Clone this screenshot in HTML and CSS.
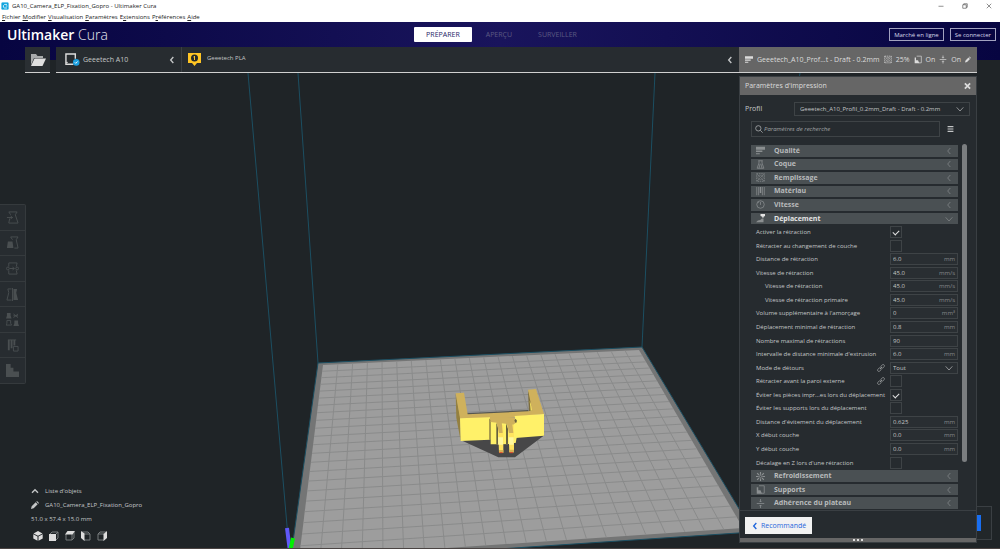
FILE: index.html
```html
<!doctype html>
<html lang="fr">
<head>
  <title>GA10_Camera_ELP_Fixation_Gopro - Ultimaker Cura</title>
  <meta charset="UTF-8">
  <meta name="viewport" content="width=device-width, initial-scale=1">
  <link rel="stylesheet" href="styles.css">
</head>
<body>
  <svg class="sprite" aria-hidden="true">
    <symbol id="left" viewBox="0 0 12 12"><path d="M8 1.5 4 6l4 4.5"/></symbol>
    <symbol id="down" viewBox="0 0 12 12"><path d="M1 3.5 6 9l5-5.500"/></symbol>
    <symbol id="up" viewBox="0 0 12 12"><path d="M1.500 8.500 6 4l4.500 4.500"/></symbol>
    <symbol id="quality" viewBox="0 0 12 12"><path class="solid" d="M0 1h12v4H0zM0 6h8.500v2H0zM0 9.500h5V11H0z"/></symbol>
    <symbol id="shell" viewBox="0 0 12 12"><path d="M3 1h6M4 1v3L1.500 11h9L8 4V1M5.500 5 4 11M6.500 5 8 11"/></symbol>
    <symbol id="infill" viewBox="0 0 12 12"><path stroke-dasharray="2 1" d="M1 1h10v10H1z"/><path stroke-dasharray="1.500 1" d="M6 2.500 9.500 6 6 9.500 2.500 6zM1 1l10 10M11 1 1 11"/></symbol>
    <symbol id="material" viewBox="0 0 12 12"><path d="M1 0v11M3.500 0v11M8.500 0v11M11 0v11"/><path stroke-width="2" d="M6 0v8"/></symbol>
    <symbol id="speed" viewBox="0 0 12 12"><circle cx="6" cy="6" r="5"/><path d="M6 2.500V6.500M3 3l1 1"/></symbol>
    <symbol id="travel" viewBox="0 0 12 12"><path fill="#e4e4e4" stroke="none" d="M6 0h6v2.500l-2 1V5H8.500V3.500L6 2.500z"/><path class="solid" d="M0 11l2.500-2.500 3-.5L8 6h2v5z"/></symbol>
    <symbol id="cooling" viewBox="0 0 12 12"><circle cx="6" cy="6" r="1.500"/><path stroke-width="1.500" d="M6 0v3.500M6 8.500V12M0 6h3.500M8.500 6H12M1.500 1.500l2.500 2.500M8 8l2.500 2.500M10.500 1.500 8 4M4 8l-2.500 2.500"/></symbol>
    <symbol id="support" viewBox="0 0 12 12"><path d="M4 1h7v10H7"/><path class="solid" d="M1 3h2v4h3l2 4.500H1z"/></symbol>
    <symbol id="adhesion" viewBox="0 0 12 12"><path d="M1 6h10M6 0v4M6 12V8M4.500 2.500 6 4l1.500-1.500M4.500 9.500 6 8l1.500 1.500"/></symbol>
    <symbol id="pencil" viewBox="0 0 12 12"><path class="solid" d="M0 12l1-4L7 2l3 3-6 6zM8 1l1-1 3 3-1 1z"/></symbol>
    <symbol id="link" viewBox="0 0 12 12"><rect x="5.500" y="1.500" width="6" height="4" rx="2" transform="rotate(-45 8.500 3.500)"/><rect x=".5" y="6.500" width="6" height="4" rx="2" transform="rotate(-45 3.500 8.500)"/><path d="M4.500 7.500l3-3"/></symbol>
    <symbol id="close" viewBox="0 0 12 12"><path d="M1.500 1.500l9 9M10.500 1.500l-9 9"/></symbol>
    <symbol id="search" viewBox="0 0 12 12"><circle cx="5" cy="5" r="4"/><path d="M8 8l3.500 3.500"/></symbol>
  </svg>

  <header class="window-bar">
    <svg class="app-logo" viewBox="0 0 10 10"><rect width="10" height="10" rx="2"/><path d="M7.500 3H4.500L3 4.500v2L4.500 7.500h3M6 5h2"/></svg>
    <span class="window-title">GA10_Camera_ELP_Fixation_Gopro - Ultimaker Cura</span>
    <div class="window-buttons">
      <button aria-label="Réduire"><svg class="icon" viewBox="0 0 12 12"><path d="M1 6.500h10"/></svg></button>
      <button aria-label="Restaurer"><svg class="icon" viewBox="0 0 12 12"><path d="M1.500 3.500h7v7h-7zM3.500 3.500v-2h7v7h-2"/></svg></button>
      <button aria-label="Fermer"><svg class="icon"><use href="#close"/></svg></button>
    </div>
  </header>
  <nav class="menu-bar">
    <a href="#"><u>F</u>ichier</a>
    <a href="#"><u>M</u>odifier</a>
    <a href="#"><u>V</u>isualisation</a>
    <a href="#"><u>P</u>aramètres</a>
    <a href="#">E<u>x</u>tensions</a>
    <a href="#">P<u>r</u>éférences</a>
    <a href="#"><u>A</u>ide</a>
  </nav>

  <div class="app">
    <header class="top-bar">
      <h1><b>Ultimaker</b> Cura</h1>
      <nav class="stages">
        <button class="stage active">PRÉPARER</button>
        <button class="stage">APERÇU</button>
        <button class="stage">SURVEILLER</button>
      </nav>
      <div class="account">
        <button>Marché en ligne</button>
        <button>Se connecter</button>
      </div>
    </header>

    <div class="stage-menu">
      <button class="open-file" aria-label="Ouvrir">
        <svg viewBox="0 0 16 14"><path fill="#a8abac" d="M1 12V1h5l1.500 2H13v2H4z"/><path fill="#e0e0e0" d="M4.500 5.500H16L12.500 13H1z"/></svg>
      </button>
      <div class="configuration">
        <button class="machine">
          <svg class="machine-icon" viewBox="0 0 16 14"><path fill="none" stroke="#ddd" stroke-width="1.500" d="M11 6V1H1v11h8"/><path stroke="#ddd" d="M1 10h2"/><circle cx="12" cy="10" r="3.500" fill="#1b9fe0"/><path fill="none" stroke="#fff" d="M10.500 10l1 1 2-2"/></svg>
          Geeetech A10
          <svg class="icon arrow"><use href="#left"/></svg>
        </button>
        <button class="material">
          <svg class="material-icon" viewBox="0 0 13 14"><path fill="#ffc524" d="M0 0h13v10H9l-2.500 3L4 10H0z"/><circle cx="6.500" cy="5" r="3.500" fill="#23282b"/><path stroke="#ffc524" d="M6.500 3v4M5.500 4h1"/></svg>
          <span class="material-name">Geeetech PLA</span>
          <svg class="icon arrow"><use href="#left"/></svg>
        </button>
      </div>
      <button class="print-summary">
        <svg class="icon"><use href="#quality"/></svg>
        <span class="summary-profile">Geeetech_A10_Prof...t - Draft - 0.2mm</span>
        <svg class="icon"><use href="#infill"/></svg><span>25%</span>
        <svg class="icon"><use href="#support"/></svg><span>On</span>
        <svg class="icon"><use href="#adhesion"/></svg><span>On</span>
        <svg class="icon small"><use href="#pencil"/></svg>
      </button>
    </div>

    <main class="workspace">
      <svg class="scene" viewBox="0 73 1000 475" preserveAspectRatio="xMidYMin slice">
        <polygon class="plate-edge" points="318,363 642,347 753,532 290,563"/>
        <polygon class="plate" points="323,365 639,350 743,528 299,558"/>
        <g id="plate-grid"></g>
        <path class="volume" d="M248 73 289 549M298 73l20 290M655 73l-13 274M800 73l-3 20M290 563 318 363 642 347 753 532z"/>
        <path stroke="#6058f8" stroke-width="4" d="M287 528l3 24"/>
        <path stroke="#00f000" stroke-width="4" d="M293 538l-3 14"/>
        <g transform="translate(430 370) scale(.3333)">
          <path fill="#474748" d="M92 210 205 262h50l88-66-60-20H120z"/>
          <path fill="#55564f" d="M105 130l190-10v16H105z"/>
          <path fill="#94803f" d="M77 70 91 145l1 68-13-70z"/>
          <path fill="#7c6c3b" d="M294 62l3 62 25-5z"/>
          <path fill="#f0dc60" d="M299 92l12 28-9 3z"/>
          <path fill="#cfb15c" d="M77 70l25-2 11 65 194-10-13-64 24-2 24 75-87 8-75 14-90-9z"/>
          <path fill="#fff169" d="M90 145l90-3v67l-88 4zM254 138l88-6v65l-86 7z"/>
          <path fill="#7d7040" d="M178 145l5 8v56h-5z"/>
          <path fill="#fff169" d="M182 153h78v50l-3 16h-6l-19 4h-50z"/>
          <path fill="#cfb15c" d="M180 142h72l8 14-10 8-68-8z"/>
          <path fill="#66603f" d="M199 158l5 14v51h-5zM228 160l6 16v46h-6zM257 146l4 6-3 8-5-8z"/>
          <path fill="#474748" d="M220 224h16v26h-16z"/>
          <path fill="#ffe45f" d="M204 165h16v83h-13zM235 165h17v82h-14z"/>
          <path fill="#cfb15c" d="M198 150l17 3 3 36h-11zM228 150l18 3 4 36h-13z"/>
          <path fill="#fff8a0" d="M204 202h15v22h-14zM236 202h15v22h-14z"/>
          <path fill="#d8b154" d="M207 240h13v8h-13zM238 239h14v8h-14z"/>
          <path stroke="#e3482c" stroke-width="3" d="M208 248h10M239 248h10"/>
        </g>
      </svg>

      <div class="left-side">
        <div class="tools">
          <button aria-label="Déplacer"><svg class="icon" viewBox="0 0 14 14"><path d="M3 1h9l-2 3 3 9H3l1-5M3 1l2 3M1 7h6M5 5.500 7 7 5 8.500"/></svg></button>
          <button aria-label="Mettre à l'échelle"><svg class="icon" viewBox="0 0 14 14"><path d="M5 1h8l-2 3 2 9H9M5 1l2 3"/><path class="solid" d="M2 6h5l1 7H1z"/></svg></button>
          <button aria-label="Tourner"><svg class="icon" viewBox="0 0 14 14"><path d="M3 5V1h9l-1 4M3 9v4h9l-1-4M4 7h5M7 5.500 9 7 7 8.500"/><circle cx="2" cy="7" r="1.500"/><circle cx="12" cy="7" r="1.500"/></svg></button>
          <button aria-label="Miroir"><svg class="icon" viewBox="0 0 14 14"><path d="M6 1H2l1 4-2 8h5M7 0v14"/><path class="solid" d="M8 1h4l-1 4 2 8H8z"/></svg></button>
          <button aria-label="Paramètres par modèle"><svg class="icon" viewBox="0 0 14 14"><path class="solid" d="M1 0h4v3l1 3H0l1-3zM9 8h4v3l1 3H8l1-3z"/><path d="M8 1l5 4M13 1 8 5M8 3h5M1 8h4v3l1 2H0l1-2z"/></svg></button>
          <button aria-label="Bloqueur de support"><svg class="icon" viewBox="0 0 14 14"><path stroke-width="2" d="M3 1v11M6 1v9M9 1v6"/><path d="M2 1h9M8 8h5v5H8z"/></svg></button>
          <button aria-label="Supports"><svg class="icon" viewBox="0 0 14 14"><path class="solid" d="M0 0h5v4h3v4h6v6H0z"/></svg></button>
        </div>
        <div class="objects">
          <button class="object-toggle"><svg class="icon"><use href="#up"/></svg>Liste d'objets</button>
          <button class="object-name"><svg class="icon"><use href="#pencil"/></svg>GA10_Camera_ELP_Fixation_Gopro</button>
          <p>51.0 x 57.4 x 15.0 mm</p>
          <div class="views">
            <button aria-label="Vue 3D"><svg viewBox="0 0 10 10"><path fill="#ddd" d="M5 0l4.500 2.500L5 4.800.5 2.500zM.3 3.300l4.200 2.200v4.300L.3 7.500zM9.700 3.300 5.500 5.500v4.300l4.200-2.300z"/></svg></button>
            <button aria-label="Vue de face"><svg viewBox="0 0 10 10"><path class="cube" d="M1 3l2-2h6v6L7 9M7 3l2-2"/><path fill="#ddd" d="M0 3h7v7H0z"/></svg></button>
            <button aria-label="Vue du dessus"><svg viewBox="0 0 10 10"><path class="cube" d="M1 3v6h6V3M7 9l2-2V1"/><path fill="#ddd" d="M0 3.500 2.500 0H10L7.500 3.500z"/></svg></button>
            <button aria-label="Vue de gauche"><svg viewBox="0 0 10 10"><path class="cube" d="M3 3h6v6H3M1 1h6l2 2"/><path fill="#ddd" d="M0 0l3.500 2.500V10L0 7z"/></svg></button>
            <button aria-label="Vue de droite"><svg viewBox="0 0 10 10"><path class="cube" d="M7 3H1v6h6M1 3l2-2h6"/><path fill="#ddd" d="M6.500 3 10 0v7l-3.500 3z"/></svg></button>
          </div>
        </div>
      </div>

      <div class="action-panel"><button aria-label="Découper"></button></div>

      <section class="settings-panel">
        <header class="panel-title">
          <h2>Paramètres d'impression</h2>
          <button aria-label="Fermer"><svg class="icon"><use href="#close"/></svg></button>
        </header>
        <div class="profile-row">
          <label for="profile">Profil</label>
          <div class="select profile-select">
            <select id="profile"><option>Geeetech_A10_Profil_0.2mm_Draft - Draft - 0.2mm</option></select>
            <svg class="icon"><use href="#down"/></svg>
          </div>
        </div>
        <div class="search-row">
          <div class="search">
            <svg class="icon"><use href="#search"/></svg>
            <input type="search" placeholder="Paramètres de recherche" aria-label="Paramètres de recherche">
          </div>
          <button aria-label="Visibilité"><svg class="icon" viewBox="0 0 12 12"><path d="M1 2h10M1 6h10M1 10h10"/></svg></button>
        </div>

        <div class="settings-scroll">
          <div class="settings">
            <button class="category"><svg class="icon"><use href="#quality"/></svg>Qualité<svg class="icon arrow"><use href="#left"/></svg></button>
            <button class="category"><svg class="icon"><use href="#shell"/></svg>Coque<svg class="icon arrow"><use href="#left"/></svg></button>
            <button class="category"><svg class="icon"><use href="#infill"/></svg>Remplissage<svg class="icon arrow"><use href="#left"/></svg></button>
            <button class="category"><svg class="icon"><use href="#material"/></svg>Matériau<svg class="icon arrow"><use href="#left"/></svg></button>
            <button class="category"><svg class="icon"><use href="#speed"/></svg>Vitesse<svg class="icon arrow"><use href="#left"/></svg></button>
            <button class="category open"><svg class="icon"><use href="#travel"/></svg>Déplacement<svg class="icon arrow"><use href="#down"/></svg></button>
            <div class="setting"><label for="s1">Activer la rétraction</label><div class="control"><input type="checkbox" id="s1" checked></div></div>
            <div class="setting"><label for="s2">Rétracter au changement de couche</label><div class="control"><input type="checkbox" id="s2"></div></div>
            <div class="setting"><label for="s3">Distance de rétraction</label><div class="control field"><input type="text" id="s3" value="6.0"><span>mm</span></div></div>
            <div class="setting"><label for="s4">Vitesse de rétraction</label><div class="control field"><input type="text" id="s4" value="45.0"><span>mm/s</span></div></div>
            <div class="setting child"><label for="s5">Vitesse de rétraction</label><div class="control field"><input type="text" id="s5" value="45.0"><span>mm/s</span></div></div>
            <div class="setting child"><label for="s6">Vitesse de rétraction primaire</label><div class="control field"><input type="text" id="s6" value="45.0"><span>mm/s</span></div></div>
            <div class="setting"><label for="s7">Volume supplémentaire à l'amorçage</label><div class="control field"><input type="text" id="s7" value="0"><span>mm³</span></div></div>
            <div class="setting"><label for="s8">Déplacement minimal de rétraction</label><div class="control field"><input type="text" id="s8" value="0.8"><span>mm</span></div></div>
            <div class="setting"><label for="s9">Nombre maximal de rétractions</label><div class="control field"><input type="text" id="s9" value="90"></div></div>
            <div class="setting"><label for="s10">Intervalle de distance minimale d'extrusion</label><div class="control field"><input type="text" id="s10" value="6.0"><span>mm</span></div></div>
            <div class="setting"><label for="s11">Mode de détours</label><svg class="icon"><use href="#link"/></svg><div class="control select"><select id="s11"><option>Tout</option></select><svg class="icon"><use href="#down"/></svg></div></div>
            <div class="setting"><label for="s12">Rétracter avant la paroi externe</label><svg class="icon"><use href="#link"/></svg><div class="control"><input type="checkbox" id="s12"></div></div>
            <div class="setting"><label for="s13">Éviter les pièces impr...es lors du déplacement</label><div class="control"><input type="checkbox" id="s13" checked></div></div>
            <div class="setting"><label for="s14">Éviter les supports lors du déplacement</label><div class="control"><input type="checkbox" id="s14"></div></div>
            <div class="setting"><label for="s15">Distance d'évitement du déplacement</label><div class="control field"><input type="text" id="s15" value="0.625"><span>mm</span></div></div>
            <div class="setting"><label for="s16">X début couche</label><div class="control field"><input type="text" id="s16" value="0.0"><span>mm</span></div></div>
            <div class="setting"><label for="s17">Y début couche</label><div class="control field"><input type="text" id="s17" value="0.0"><span>mm</span></div></div>
            <div class="setting"><label for="s18">Décalage en Z lors d'une rétraction</label><div class="control"><input type="checkbox" id="s18"></div></div>
            <button class="category"><svg class="icon"><use href="#cooling"/></svg>Refroidissement<svg class="icon arrow"><use href="#left"/></svg></button>
            <button class="category"><svg class="icon"><use href="#support"/></svg>Supports<svg class="icon arrow"><use href="#left"/></svg></button>
            <button class="category"><svg class="icon"><use href="#adhesion"/></svg>Adhérence du plateau<svg class="icon arrow"><use href="#left"/></svg></button>
          </div>
          <div class="scrollbar"></div>
        </div>

        <footer class="panel-footer">
          <button class="recommended"><svg class="icon"><use href="#left"/></svg>Recommandé</button>
        </footer>
        <div class="resize-handle"><i></i><i></i><i></i></div>
      </section>
    </main>
  </div>
  <script src="scene.js"></script>
</body>
</html>
```
FILE: styles.css
```css
* { box-sizing: border-box }
html, body { height: 100% }
body {
  margin: 0;
  display: flex;
  flex-flow: column;
  color: #c4c6c7;
  background: #1f2427;
  font: 6px/8px 'Open Sans', 'Noto Sans', sans-serif }
button, input, select {
  margin: 0;
  padding: 0;
  border: 0;
  font: inherit;
  color: inherit;
  background: none }
button {
  display: flex;
  align-items: center;
  justify-content: center }
h1, h2, p { margin: 0 }
.sprite {
  position: absolute;
  width: 0;
  height: 0 }
.icon {
  flex: none;
  width: 8px;
  height: 8px;
  fill: none;
  stroke: currentColor;
  stroke-width: 1 }
  .solid {
    fill: currentColor;
    stroke: none }
.arrow {
  margin-left: auto;
  stroke-width: 2 }

/* Window frame */
.window-bar, .menu-bar {
  flex: none;
  display: flex;
  align-items: center;
  background: white;
  color: #222 }
.window-bar {
  height: 12px;
  padding: 0 8px 0 1px;
  gap: 3px }
  .app-logo {
    width: 8px;
    height: 8px;
    fill: #12a5de;
    stroke: white }
  .window-buttons {
    display: flex;
    gap: 18px;
    margin-left: auto }
    .window-buttons .icon {
      width: 6px;
      height: 6px;
      stroke-width: 1 }
.menu-bar {
  height: 10px;
  padding: 0 2px;
  gap: 2px }
  .menu-bar a {
    color: inherit;
    text-decoration: none }

/* The navy band runs on behind the top of the stage menu */
.app {
  flex: 1;
  display: flex;
  flex-flow: column;
  border-bottom: 1px solid #4a4443;
  background: linear-gradient(90deg, #070541, #19145c 50%, #070541) 0 0 / 100% 38px no-repeat }
.top-bar {
  height: 25px;
  padding: 0 4px 0 7px;
  display: grid;
  grid-template-columns: 1fr auto 1fr;
  align-items: center }
  h1 {
    font-size: 14px;
    font-weight: 300;
    line-height: 18px;
    color: #e8e8f0 }
    h1 b {
      font-weight: 600;
      color: white }
  .stages {
    display: flex;
    gap: 2px }
    .stage {
      height: 15px;
      padding: 0 12px;
      border-radius: 1px;
      font-size: 7px;
      color: #5c5a83 }
      .stage.active {
        background: white;
        color: #1e2466 }
  .account {
    display: flex;
    justify-content: flex-end;
    gap: 6px }
    .account button {
      height: 13px;
      padding: 0 4px;
      border: 1px solid #a2a2c0;
      color: #d8d8e8 }

.stage-menu {
  flex: none;
  height: 26px;
  display: flex;
  padding: 0 23px 0 25px }
  .stage-menu > * { border-bottom: 1px solid #d0d0d0 }
  .open-file {
    width: 25px;
    margin-right: 6px;
    background: #2a2f33 }
    .open-file svg { width: 16px }
  .configuration {
    flex: 1;
    display: flex;
    background: #272c30 }
    .machine, .material { padding: 0 5px 0 9px }
    .machine {
      width: 126px;
      gap: 3px;
      font-size: 7px;
      border-right: 1px solid #3a3f43 }
      .machine-icon { width: 15px }
    .material {
      flex: 1;
      gap: 6px;
      padding-left: 6px }
      .material-icon { width: 13px }
      .material-name { padding-bottom: 4px }
  .print-summary {
    width: 238px;
    padding: 0 6px;
    gap: 4px;
    justify-content: flex-start;
    background: #666;
    color: #dcdcdc;
    font-size: 7px }
    .print-summary .icon { height: 9px }
    .summary-profile {
      flex: 1;
      text-align: left;
      white-space: nowrap }
    .print-summary .small { width: 6px }

/* 3D view */
.workspace {
  flex: 1;
  position: relative;
  display: flex;
  justify-content: space-between;
  background: #1f2427 }
.scene {
  position: absolute;
  width: 100%;
  height: 100% }
  .plate-edge { fill: #747575 }
  .plate { fill: #9d9d9d }
  #plate-grid line { stroke: #8a8b8b }
  .volume {
    fill: none;
    stroke: #1c4f62 }
.left-side {
  position: relative;
  display: flex;
  flex-flow: column;
  justify-content: space-between;
  padding: 131px 0 6px }
.tools {
  width: 26px;
  height: 180px;
  display: flex;
  flex-flow: column;
  border: 1px solid #353a3d;
  border-left: 0;
  border-radius: 0 2px 2px 0;
  background: #272c30;
  color: #4a4f51 }
  .tools button {
    flex: 1;
    padding-right: 1px }
  .tools button + button { border-top: 1px solid #353a3d }
  .tools .icon {
    width: 13px;
    height: 13px }
.objects {
  padding-left: 31px;
  display: flex;
  flex-flow: column;
  align-items: flex-start;
  gap: 5px }
  .object-toggle, .object-name { gap: 6px }
  .object-toggle .icon { stroke-width: 2 }
  .object-name { height: 10px }
  .views {
    display: flex;
    gap: 6px;
    padding: 3px 2px 1px }
    .views svg {
      width: 10px;
      height: 10px }
    .cube {
      fill: none;
      stroke: #777b7d }
.action-panel {
  position: absolute;
  right: 8px;
  bottom: 8px;
  width: 240px;
  height: 34px;
  padding: 8px 10px;
  border: 1px solid #3a3f43;
  background: #22272a }
  .action-panel button {
    width: 100%;
    height: 16px;
    background: #196ef0 }

/* Print settings */
.settings-panel {
  position: relative;
  width: 238px;
  margin: 3px 23px 5px 0;
  display: flex;
  flex-flow: column;
  border: 1px solid #3a3f43;
  background: #262b2f }
.panel-title {
  height: 18px;
  padding: 0 5px;
  display: flex;
  align-items: center;
  justify-content: space-between;
  background: #666;
  color: #dcdcdc }
  .panel-title h2 {
    font-size: 7px;
    font-weight: 400;
    line-height: 10px }
  .panel-title .icon {
    width: 7px;
    stroke-width: 3 }
.profile-row {
  display: flex;
  align-items: center;
  justify-content: space-between;
  padding: 7px 6px 5px 5px;
  font-size: 7px }
.select {
  display: flex;
  align-items: center;
  border: 1px solid #3e4346;
  padding-right: 5px }
  .select select {
    flex: 1;
    appearance: none;
    min-width: 0 }
.profile-select {
  width: 176px;
  height: 14px;
  padding-left: 5px;
  font-size: 6px }
.search-row {
  display: flex;
  gap: 7px;
  padding: 0 22px 7px 11px }
  .search {
    flex: 1;
    height: 16px;
    display: flex;
    align-items: center;
    gap: 1px;
    padding: 0 3px;
    border: 1px solid #3e4346 }
    .search input {
      flex: 1;
      font-style: italic;
      outline: 0 }
    .search input::placeholder { color: #a0a3a4 }
  .search-row button .icon {
    width: 7px;
    stroke-width: 2 }
.settings-scroll {
  flex: 1;
  display: flex;
  gap: 4px;
  padding: 0 11px }
.settings {
  flex: 1;
  display: grid;
  grid-auto-rows: 1fr }
.category {
  margin: 1px 0;
  padding: 0 5px;
  gap: 9px;
  background: #4a5053;
  color: #b8babb;
  font-size: 7px;
  font-weight: 700 }
  .category .icon {
    width: 9px;
    height: 9px;
    color: #8b8f91 }
  .category .arrow {
    width: 8px;
    height: 8px;
    stroke-width: 1 }
  .category.open { color: #e4e4e4 }
.setting {
  display: flex;
  align-items: center;
  gap: 5px;
  padding-left: 5px;
  white-space: nowrap }
  .setting label { flex: 1 }
  .setting.child label { padding-left: 9px }
  .setting > .icon { color: #a0a3a4 }
.control {
  width: 68px;
  height: 12px;
  display: flex }
.field, .control.select {
  align-items: center;
  padding: 0 2px;
  border: 1px solid #3e4346;
  background: #292e32 }
  .control.select { padding-right: 4px }
  .field input { flex: 1; width: 0 }
  .field span { color: #85898b }
input[type=checkbox] {
  appearance: none;
  width: 12px;
  border: 1px solid #3e4346;
  display: grid;
  place-items: center }
  input[type=checkbox]:checked::after {
    content: '';
    width: 5px;
    height: 3px;
    border: solid #e0e0e0;
    border-width: 0 0 1px 1px;
    transform: rotate(-45deg) }
.scrollbar {
  flex: none;
  width: 5px;
  height: 87%;
  border-radius: 3px;
  background: #7b7e80 }
.panel-footer {
  padding: 6px 5px 4px;
  border-top: 1px solid #3a3f43 }
  .recommended {
    height: 17px;
    padding: 0 6px;
    gap: 2px;
    background: #f2f2f2;
    color: #1f66dc;
    font-size: 7px }
    .recommended .icon { stroke-width: 2 }
.resize-handle {
  height: 4px;
  display: flex;
  align-items: center;
  justify-content: center;
  gap: 2px;
  background: #666 }
  .resize-handle i {
    width: 2px;
    height: 2px;
    background: #ddd }
```
FILE: scene.js
```js
// Draws the build plate grid, projected onto the four corners of the plate
const corners = [[323, 365], [639, 350], [743, 528], [299, 558]];
const cells = 22;

const [[x0, y0], [x1, y1], [x2, y2], [x3, y3]] = corners;
const dx1 = x1 - x2, dx2 = x3 - x2, sx = x0 - x1 + x2 - x3;
const dy1 = y1 - y2, dy2 = y3 - y2, sy = y0 - y1 + y2 - y3;
const det = dx1 * dy2 - dx2 * dy1;
const g = (sx * dy2 - dx2 * sy) / det;
const h = (dx1 * sy - sx * dy1) / det;

function project (u, v) {
  const w = g * u + h * v + 1;
  return [
    ((x1 - x0 + g * x1) * u + (x3 - x0 + h * x3) * v + x0) / w,
    ((y1 - y0 + g * y1) * u + (y3 - y0 + h * y3) * v + y0) / w
  ];
}

function addLine (from, to) {
  const line = document.createElementNS("http://www.w3.org/2000/svg", "line");
  line.setAttribute("x1", from[0]);
  line.setAttribute("y1", from[1]);
  line.setAttribute("x2", to[0]);
  line.setAttribute("y2", to[1]);
  document.querySelector("#plate-grid").append(line);
}

for (let i = 1; i < cells; i++) {
  addLine(project(i / cells, 0), project(i / cells, 1));
  addLine(project(0, i / cells), project(1, i / cells));
}
```
